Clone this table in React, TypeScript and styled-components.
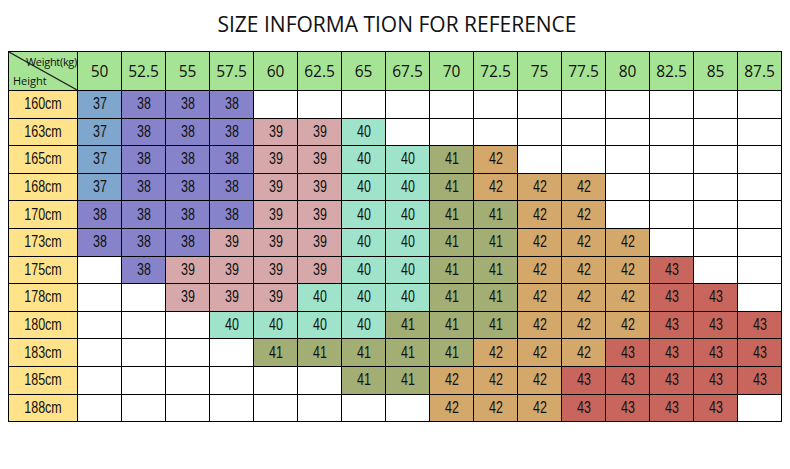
import React from "react";
import styled, { createGlobalStyle } from "styled-components";

const GlobalStyle = createGlobalStyle`
  html, body { margin: 0; padding: 0; background: #ffffff; }
  * { box-sizing: border-box; }
`;

const Page = styled.div`
  width: 790px;
  height: 469px;
  background: #ffffff;
  padding-top: 10px;
  font-family: "Liberation Sans", Arial, sans-serif;
`;

const Title = styled.h1`
  margin: 0 0 13px 0;
  font-family: "Open Sans", "Noto Sans", sans-serif;
  font-weight: 400;
  font-size: 21px;
  line-height: 28px;
  text-align: center;
  color: #111;
  padding-left: 4px;
`;

const Grid = styled.div`
  margin-left: 8px;
  display: grid;
  grid-template-columns: 69px repeat(16, 44px);
  grid-template-rows: 39px repeat(12, 27.6px);
  border-left: 1px solid #000;
  border-top: 1px solid #000;
  width: fit-content;
`;

const Cell = styled.div<{ $bg: string }>`
  position: relative;
  border-right: 1px solid #000;
  border-bottom: 1px solid #000;
  background: ${(p) => p.$bg};
  display: flex;
  align-items: center;
  justify-content: center;
  color: #111;
  overflow: hidden;
`;

const HeadNum = styled.span`
  font-family: "Open Sans", "Noto Sans", sans-serif;
  font-size: 15.5px;
  color: #111;
`;

const CondNum = styled.span`
  display: inline-block;
  font-family: "Liberation Sans", Arial, sans-serif;
  font-size: 16px;
  transform: scaleX(0.78);
  color: #111;
`;

const Diagonal = styled.svg`
  position: absolute;
  inset: 0;
  width: 100%;
  height: 100%;
`;

const CornerTop = styled.span`
  position: absolute;
  top: 2px;
  right: 0px;
  font-family: "Open Sans", "Noto Sans", sans-serif;
  font-size: 11px;
  letter-spacing: -0.3px;
  color: #111;
`;

const CornerBottom = styled.span`
  position: absolute;
  bottom: 2px;
  left: 4px;
  font-family: "Open Sans", "Noto Sans", sans-serif;
  font-size: 11px;
  color: #111;
`;

const GREEN = "#a6e394";
const YELLOW = "#ffe38a";
const COLORS: Record<number, string> = {
  37: "#7fa6cc",
  38: "#8683cb",
  39: "#d6a8aa",
  40: "#9fe3cb",
  41: "#a2ae74",
  42: "#d4a76b",
  43: "#c8665e",
};

const weights = ["50", "52.5", "55", "57.5", "60", "62.5", "65", "67.5", "70", "72.5", "75", "77.5", "80", "82.5", "85", "87.5"];

const _ = 0;
const rows: { h: string; v: number[] }[] = [
  { h: "160cm", v: [37, 38, 38, 38, _, _, _, _, _, _, _, _, _, _, _, _] },
  { h: "163cm", v: [37, 38, 38, 38, 39, 39, 40, _, _, _, _, _, _, _, _, _] },
  { h: "165cm", v: [37, 38, 38, 38, 39, 39, 40, 40, 41, 42, _, _, _, _, _, _] },
  { h: "168cm", v: [37, 38, 38, 38, 39, 39, 40, 40, 41, 42, 42, 42, _, _, _, _] },
  { h: "170cm", v: [38, 38, 38, 38, 39, 39, 40, 40, 41, 41, 42, 42, _, _, _, _] },
  { h: "173cm", v: [38, 38, 38, 39, 39, 39, 40, 40, 41, 41, 42, 42, 42, _, _, _] },
  { h: "175cm", v: [_, 38, 39, 39, 39, 39, 40, 40, 41, 41, 42, 42, 42, 43, _, _] },
  { h: "178cm", v: [_, _, 39, 39, 39, 40, 40, 40, 41, 41, 42, 42, 42, 43, 43, _] },
  { h: "180cm", v: [_, _, _, 40, 40, 40, 40, 41, 41, 41, 42, 42, 42, 43, 43, 43] },
  { h: "183cm", v: [_, _, _, _, 41, 41, 41, 41, 41, 42, 42, 42, 43, 43, 43, 43] },
  { h: "185cm", v: [_, _, _, _, _, _, 41, 41, 42, 42, 42, 43, 43, 43, 43, 43] },
  { h: "188cm", v: [_, _, _, _, _, _, _, _, 42, 42, 42, 43, 43, 43, 43, _] },
];

export default function App() {
  return (
    <>
      <GlobalStyle />
      <Page>
        <Title>SIZE INFORMA TION FOR REFERENCE</Title>
        <Grid>
          <Cell $bg={GREEN}>
            <Diagonal viewBox="0 0 100 100" preserveAspectRatio="none">
              <line x1="0" y1="0" x2="100" y2="100" stroke="#222" strokeWidth="1.2" vectorEffect="non-scaling-stroke" />
            </Diagonal>
            <CornerTop>Weight(kg)</CornerTop>
            <CornerBottom>Height</CornerBottom>
          </Cell>
          {weights.map((w) => (
            <Cell key={w} $bg={GREEN}>
              <HeadNum>{w}</HeadNum>
            </Cell>
          ))}
          {rows.map((r) => (
            <React.Fragment key={r.h}>
              <Cell $bg={YELLOW}>
                <CondNum>{r.h}</CondNum>
              </Cell>
              {r.v.map((n, i) => (
                <Cell key={i} $bg={n ? COLORS[n] : "#ffffff"}>
                  {n ? <CondNum>{n}</CondNum> : null}
                </Cell>
              ))}
            </React.Fragment>
          ))}
        </Grid>
      </Page>
    </>
  );
}
